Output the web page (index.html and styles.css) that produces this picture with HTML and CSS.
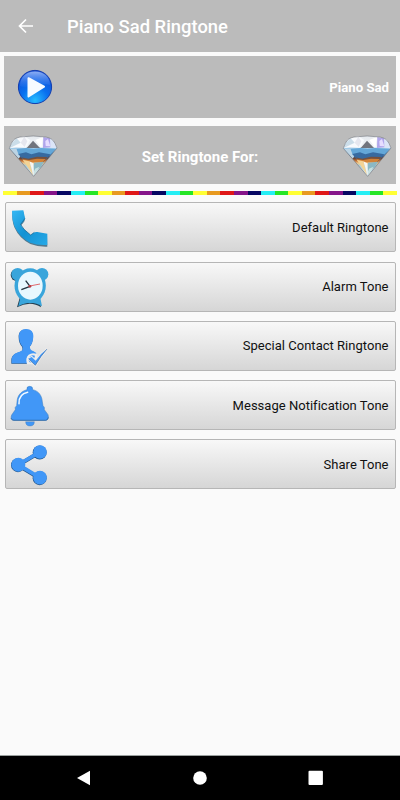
FILE: index.html
```html
<!DOCTYPE html>
<html lang="en">
<head>
<meta charset="utf-8">
<title>Piano Sad Ringtone</title>
<link rel="stylesheet" href="styles.css">
</head>
<body>
<svg class="defs" width="0" height="0" aria-hidden="true">
  <defs>
    <linearGradient id="facets" x1="0" y1="0" x2="0" y2="1">
      <stop offset="0" stop-color="#e5e9ee"/><stop offset=".27" stop-color="#f1f4f8"/>
      <stop offset=".33" stop-color="#75b3df"/><stop offset=".43" stop-color="#4687bd"/>
      <stop offset=".5" stop-color="#35588a"/><stop offset=".56" stop-color="#72452f"/>
      <stop offset=".62" stop-color="#ca7637"/><stop offset=".67" stop-color="#edc58a"/>
      <stop offset=".74" stop-color="#a9d0df"/><stop offset="1" stop-color="#e8edf1"/>
    </linearGradient>
    <radialGradient id="ball" cx=".5" cy=".9" r=".9">
      <stop offset="0" stop-color="#27bcff"/><stop offset=".45" stop-color="#0870ef"/><stop offset="1" stop-color="#1648cf"/>
    </radialGradient>
    <linearGradient id="shine" x1="0" y1="0" x2="0" y2="1">
      <stop offset="0" stop-color="#b5d0ff" stop-opacity=".75"/><stop offset="1" stop-color="#4b94ff" stop-opacity=".1"/>
    </linearGradient>
    <linearGradient id="handset" x1="0" y1="0" x2="1" y2="1">
      <stop offset="0" stop-color="#35b8f5"/><stop offset=".5" stop-color="#1492d3"/><stop offset="1" stop-color="#26a9e7"/>
    </linearGradient>
    <symbol id="diamond" viewBox="24 42 150 126">
      <path d="M34 67Q40 52 60 48 100 42 138 48 158 52 165 67L171 81 101 166 28 82Z" fill="url(#facets)"/>
      <path d="M50 51 73 46 91 57 77 80 48 78 28 82 34 67Z" fill="#f8fafd"/>
      <path d="M50 52 62 65 28 82 35 66Z" fill="#cbdde9"/>
      <path d="M62 65 73 47 82 61 74 78Z" fill="#e6e7ef"/>
      <path d="M99 59 120 81H80Z" fill="#71747d"/>
      <path d="M106 57 130 47 124 80Z" fill="#fff"/>
      <path d="M130 48 150 52 157 78 129 81Z" fill="#b0a5eb"/>
      <path d="M150 52Q162 57 171 81L151 80Z" fill="#dce5f7"/>
      <path d="M136 60 144 54 151 76 137 75Z" fill="#e6ddff"/>
      <path d="M29 83 50 84 61 106 56 113Z" fill="#bcd4e4"/>
      <path d="M50 84 80 81 101 84 123 81 166 84 149 103 56 102Z" fill="#64a7d8"/>
      <path d="M55 99 78 94 94 100 117 94 151 100 137 116 67 114Z" fill="#376aa0"/>
      <path d="M63 109 85 113 111 107 142 108 130 124 77 119Z" fill="#75503e"/>
      <path d="M67 115 88 117 111 113 137 114 128 124 77 124Z" fill="#d28237"/>
      <path d="M68 116 88 121 99 162Z" fill="#f3d395"/>
      <path d="M88 121 100 127 101 163Z" fill="#f7f6f1"/>
      <path d="M102 125 132 122 122 139 102 149Z" fill="#8bb8c4"/>
      <path d="M105 143 118 137 101 165Z" fill="#c8e1df"/>
      <path d="M34 67Q40 52 60 48 100 42 138 48 158 52 165 67L171 81 101 166 28 82Z" fill="none" stroke="#70747b" stroke-width="1.8"/>
    </symbol>
  </defs>
</svg>
<header class="appbar">
  <svg class="back" viewBox="0 0 16 16"><path d="M15 8H2M8 1.5 1.5 8 8 14.5"/></svg>
  <h1>Piano Sad Ringtone</h1>
</header>
<main>
  <section class="panel track">
    <svg class="play" viewBox="0 0 36 36">
      <circle cx="18" cy="18" r="16.6" fill="url(#ball)" stroke="#123cae" stroke-width="1"/>
      <path d="M3 17C3 8 9 2.5 18 2.5S33 8 33 16C25 13 12 21 3 17Z" fill="url(#shine)"/>
      <path d="M11.5 9.2 27 17.7 11.5 27.4Z" fill="#f7fbff" stroke="#f7fbff" stroke-width="2" stroke-linejoin="round"/>
    </svg>
    <span>Piano Sad</span>
  </section>
  <section class="panel set">
    <svg class="gem"><use href="#diamond"/></svg>
    <span>Set Ringtone For:</span>
    <svg class="gem"><use href="#diamond"/></svg>
  </section>
  <div class="rainbow"></div>
  <nav class="options">
    <button>
      <svg viewBox="18 15 144 144">
        <path d="M37 39 70 38 74 61Q76 66 69 73L62 80Q66 91 84 105L92 112 101 105Q106 101 111 104L141 108 142 143Q114 144 91 135 58 119 43 85 35 64 37 39Z" fill="#18506e" transform="translate(0 3)" opacity=".7"/>
        <path d="M36 38 70 37 75 60Q76 65 69 72L62 79Q66 90 84 104L92 111 101 104Q106 101 112 102L142 107V141Q114 143 91 134 58 118 43 84 35 63 36 38Z" fill="url(#handset)"/>
        <path d="M75 61 62 79Q68 94 92 111L103 103" fill="none" stroke="#14618b" stroke-width="2"/>
      </svg>
      <span>Default Ringtone</span>
    </button>
    <button>
      <svg viewBox="18 12 144 144">
        <g fill="#244052" transform="translate(-2 2)"><circle cx="52" cy="46" r="18"/><path d="M61 115 53 143Q72 132 91 132T125 143L119 115Z"/></g>
        <g fill="#39a5db"><circle cx="53" cy="46" r="19"/><circle cx="126" cy="46" r="19"/><ellipse cx="90.5" cy="80" rx="47" ry="52"/><path d="M62 112 55 142Q72 131 91 131T126 142L120 112Z"/></g>
        <ellipse cx="91" cy="80" rx="37" ry="42" fill="#e9f8fe"/>
        <path d="M64 92 90 82 77 65" fill="none" stroke="#26343e" stroke-width="4"/>
        <path d="M84 82 120 75" stroke="#df4d50" stroke-width="2.5"/><circle cx="90" cy="82" r="4" fill="#b33b42"/>
      </svg>
      <span>Alarm Tone</span>
    </button>
    <button>
      <svg viewBox="18 12 144 144">
        <path d="M78 33C93 33 101 42 100 56 99 71 95 79 90 85 89 95 94 97 103 101L109 105 100 136H35V124C36 111 45 105 59 101 69 98 70 94 67 85 61 78 57 69 57 57 56 42 64 33 78 33Z" fill="#245588" transform="translate(-1 1.5)"/>
        <path d="M78 33C93 33 101 42 100 56 99 71 95 79 90 85 89 95 94 97 103 101L109 105 100 136H35V124C36 111 45 105 59 101 69 98 70 94 67 85 61 78 57 69 57 57 56 42 64 33 78 33Z" fill="#4197f7"/>
        <path d="M112 108Q96 102 86 110 75 120 81 139H112Z" fill="#ededed"/>
        <path d="M105 113Q94 109 88 117 83 123 88 132L98 136Z" fill="#4197f7"/>
        <path d="M85 122 95 117 107 128Q122 106 141 93 123 113 106 142Z" fill="#4197f7" stroke="#ededed" stroke-width="6" paint-order="stroke"/>
        <path d="M86 123 106 142Q122 114 141 93" fill="none" stroke="#2d598d" stroke-width="1.5"/>
      </svg>
      <span>Special Contact Ringtone</span>
    </button>
    <button>
      <svg viewBox="18 12 144 144">
        <path d="M81 38Q79 28 89 28T98 38C117 42 126 57 127 75L129 86Q135 90 133 98L144 113Q148 126 139 130H40Q30 127 35 114L46 98Q43 91 50 86L51 75C52 56 62 43 81 38Z" fill="#4197f7" stroke="#3478bd" stroke-width="1.5"/>
        <path d="M33 123Q34 130 42 130H137Q144 129 145 121" fill="none" stroke="#245e9c" stroke-width="2"/>
        <path d="M77 134H103Q103 147 90 147T77 134Z" fill="#4197f7" stroke="#346da9" stroke-width="1"/>
        <path d="M57 80Q56 51 83 46" fill="none" stroke="#f4faff" stroke-width="4.5" stroke-linecap="round"/>
      </svg>
      <span>Message Notification Tone</span>
    </button>
    <button>
      <svg viewBox="18 11 144 144">
        <g fill="#245588" stroke="#245588" transform="translate(-1 1.5)"><path d="M119 47 55 85 119 124" fill="none" stroke-width="12"/><circle cx="55" cy="85" r="21" stroke="none"/><circle cx="120" cy="47" r="21" stroke="none"/><circle cx="120" cy="124" r="21" stroke="none"/></g>
        <g fill="#4197f7"><path d="M119 47 55 85 119 124" fill="none" stroke="#4197f7" stroke-width="11"/><circle cx="55" cy="85" r="21"/><circle cx="120" cy="47" r="20.5"/><circle cx="120" cy="124" r="20.5"/></g>
      </svg>
      <span>Share Tone</span>
    </button>
  </nav>
</main>
<footer class="navbar">
  <svg viewBox="0 0 16 16"><path d="M1 8 14 .8V15.2Z"/></svg>
  <svg viewBox="0 0 16 16"><circle cx="8" cy="8" r="6.8"/></svg>
  <svg viewBox="0 0 16 16"><rect x=".5" y=".7" width="14.4" height="14.4" rx="1"/></svg>
</footer>
</body>
</html>
```
FILE: styles.css
```css
* { box-sizing: border-box; }
body {
  margin: 0;
  height: 800px;
  display: flex;
  flex-direction: column;
  background: #fafafa;
  font-family: Roboto, "Liberation Sans", sans-serif;
  overflow: hidden;
}
svg { display: block; flex: none; }
.defs { position: absolute; }
.appbar {
  height: 52px;
  flex: none;
  display: flex;
  align-items: center;
  padding: 0 18px;
  background: #bbb;
  color: #fff;
}
.back { width: 16px; height: 16px; fill: none; stroke: #fff; stroke-width: 1.7; }
h1 { margin: 2px 0 0 33px; font-size: 18.4px; line-height: 24px; font-weight: 500; white-space: nowrap; }
main { flex: 1; padding-top: 4px; }
.panel {
  margin: 0 4px;
  display: flex;
  align-items: center;
  justify-content: space-between;
  background: #bbb;
  color: #fff;
  font-weight: 700;
}
.track { height: 62px; padding: 0 7px 0 13px; font-size: 13.2px; }
.play { width: 36px; height: 36px; margin-top: -1px; }
.set { height: 58px; margin-top: 8px; padding: 0 4px; font-size: 15px; }
.set span { padding-top: 3px; }
.gem { width: 50px; height: 42px; margin-top: 1px; }
.rainbow {
  height: 4px;
  margin: 7px 3px 0;
  background: repeating-linear-gradient(90deg, #ff3 0 13.6px, #e89a20 13.6px 27.2px, #df1717 27.2px 40.8px, #851489 40.8px 54.4px, #060762 54.4px 68px, #25eef4 68px 81.6px, #26e526 81.6px 95.1px);
}
.options { display: flex; flex-direction: column; gap: 9.25px; padding: 7.4px 4.5px 0; }
button {
  height: 50px;
  display: flex;
  align-items: center;
  justify-content: space-between;
  border: 1px solid #b6b6b6;
  border-radius: 2px;
  padding: 0 6px 0 0;
  background: linear-gradient(#f8f8f8, #d6d6d6);
  color: #111;
  font: 400 13px Roboto, sans-serif;
  letter-spacing: .02px;
}
button svg { width: 48px; height: 48px; }
.navbar {
  height: 45px;
  flex: none;
  display: flex;
  align-items: center;
  justify-content: space-between;
  padding: 0 76px;
  border-top: 1px solid #9aa09e;
  background: #000;
}
.navbar svg { width: 16px; height: 16px; fill: #fff; }
```
